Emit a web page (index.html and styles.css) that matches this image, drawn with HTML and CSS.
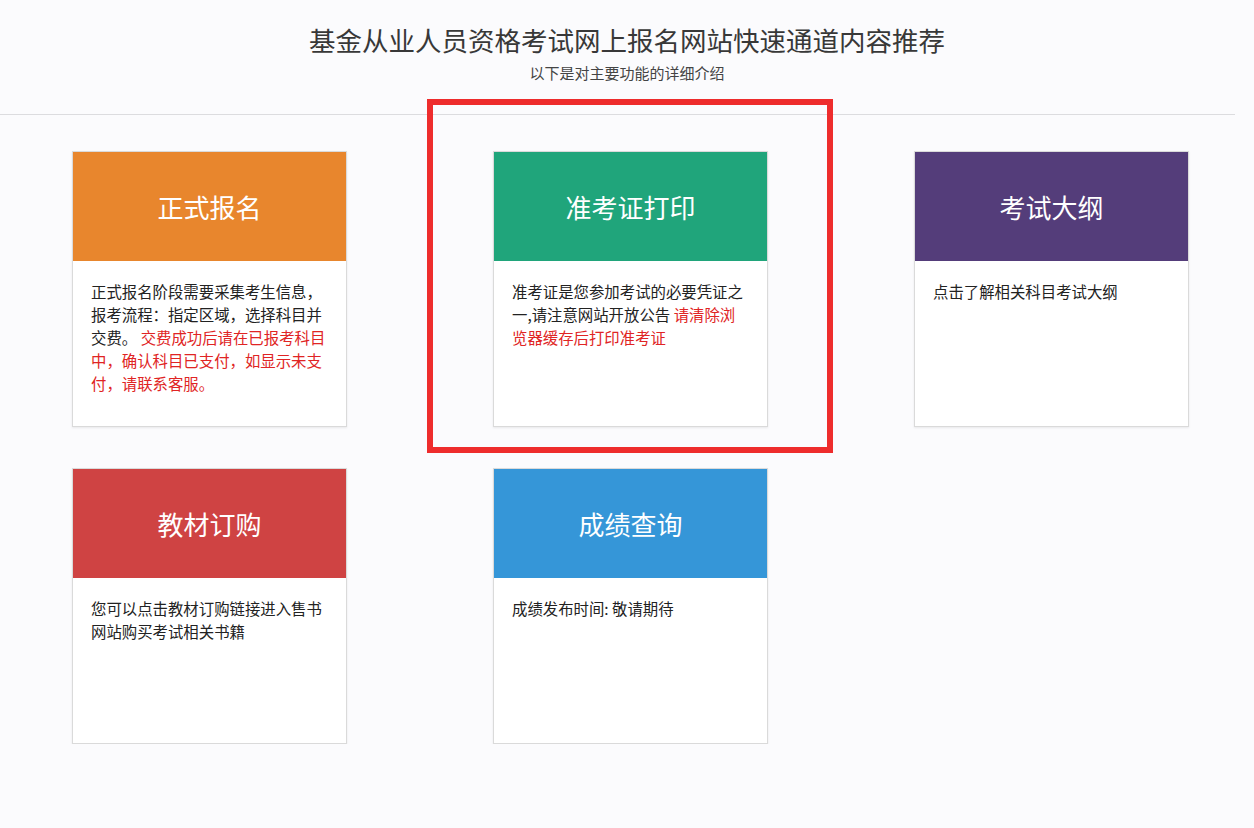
FILE: index.html
```html
<!DOCTYPE html>
<html>

<head>
    <title>基金从业人员资格考试网上报名网站快速通道</title>
    <meta charset="utf-8">
    <meta name="viewport" content="width=device-width, initial-scale=1.0">
    <link rel="stylesheet" href="styles.css">
</head>

<body>
    <header class="top">
        <h1>基金从业人员资格考试网上报名网站快速通道内容推荐</h1>
        <p class="under">以下是对主要功能的详细介绍</p>
    </header>
    <div class="linje"></div>

    <section id="liste">
        <article>
            <div class="kort-top orange">正式报名</div>
            <p>正式报名阶段需要采集考生信息，报考流程：指定区域，选择科目并交费。 <span class="rod">交费成功后请在已报考科目中，确认科目已支付，如显示未支付，请联系客服。</span></p>
        </article>
        <article class="valgt">
            <div class="kort-top gron">准考证打印</div>
            <p>准考证是您参加考试的必要凭证之一,请注意网站开放公告 <span class="rod">请清除浏览器缓存后打印准考证</span></p>
            <div class="ramme"></div>
        </article>
        <article>
            <div class="kort-top lilla">考试大纲</div>
            <p>点击了解相关科目考试大纲</p>
        </article>
        <article>
            <div class="kort-top rodt">教材订购</div>
            <p>您可以点击教材订购链接进入售书网站购买考试相关书籍</p>
        </article>
        <article>
            <div class="kort-top bla">成绩查询</div>
            <p>成绩发布时间: 敬请期待</p>
        </article>
    </section>
</body>

</html>
```

FILE: styles.css
```css
body {
    margin: 0;
    background-color: #fbfbfd;
    font-family: "Noto Sans CJK SC", "Noto Sans", sans-serif;
    color: #333;
}

.top {
    text-align: center;
    padding-top: 22px;
}

h1 {
    margin: 0;
    font-size: 26.5px;
    line-height: 36px;
    font-weight: normal;
    color: #383838;
}

.under {
    margin: 4px 0 0 0;
    font-size: 15px;
    line-height: 22px;
    color: #444;
}

.linje {
    width: 1235px;
    height: 1px;
    margin-top: 30px;
    background-color: #dcdcdf;
}

#liste {
    display: grid;
    grid-template-columns: repeat(3, 275px);
    column-gap: 146px;
    row-gap: 41px;
    margin: 36px 0 0 72px;
}

article {
    position: relative;
    height: 274px;
    background-color: white;
    border: 1px solid #dadada;
    box-shadow: 0 1px 2px rgba(0, 0, 0, 0.08);
}

.kort-top {
    height: 109px;
    color: white;
    font-size: 26px;
    display: flex;
    align-items: center;
    justify-content: center;
}

.orange {
    background-color: #e8862d;
}

.gron {
    background-color: #20a57b;
}

.lilla {
    background-color: #543d7a;
}

.rodt {
    background-color: #cf4343;
}

.bla {
    background-color: #3596d8;
}

article p {
    margin: 0;
    padding: 19px 18px;
    font-size: 15.4px;
    line-height: 23px;
    color: #222;
}

.rod {
    color: #e02424;
}

.ramme {
    position: absolute;
    left: -67px;
    top: -53px;
    right: -66px;
    bottom: -27px;
    border: 6px solid #ee2c2c;
}
```
